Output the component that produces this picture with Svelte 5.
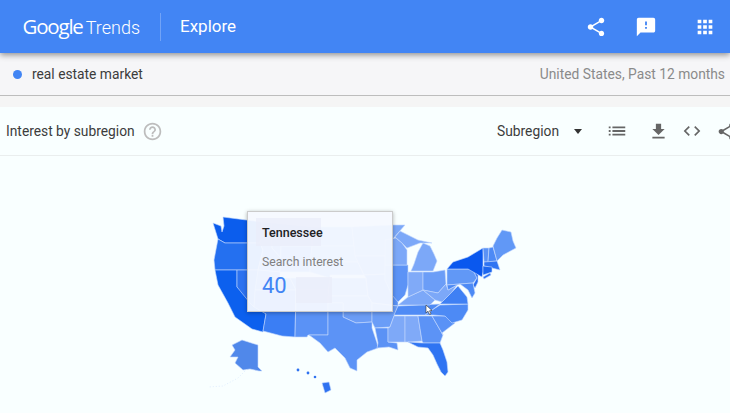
<script>
  const blue = '#4285f4';
  const states = [
    ['213,223 221,226 222,232 224,226 223,217 262,222 260,243 225,243 218,239', '#0b5ded'],
    ['218,239 225,243 260,243 263,250 258,270 215,270 214,260', '#2470f0'],
    ['215,270 237,270 237,287 266,314 263,332 252,329 235,317 228,303 218,285', '#0c60ee'],
    ['237,270 260,270 254,307 250,303 237,287', '#2c72f0'],
    ['262,222 272,223 272,248 281,258 280,272 258,270 263,250 260,243', '#4d8af5'],
    ['272,223 312,227 312,246 281,246 281,258 272,248', '#5a92f6'],
    ['281,246 312,246 310,272 280,272', '#5a92f6'],
    ['258,270 280,272 280,278 290,278 296,290 255,290', '#4d8af5'],
    ['290,278 330,278 328,290 296,290', '#5a92f6'],
    ['312,227 352,227 354,246 312,246', '#7ca8f8'],
    ['312,246 355,246 358,262 310,262', '#7ca8f8'],
    ['310,262 358,262 364,275 330,275 330,278 310,272', '#6c9df6'],
    ['330,278 366,278 368,296 328,296', '#6c9df6'],
    ['352,227 393,225 405,225 392,240 388,256 355,256 354,246', '#7ca8f8'],
    ['355,256 388,256 393,265 388,274 364,275', '#6c9df6'],
    ['364,275 388,274 392,285 398,302 398,306 372,303 368,296 366,278', '#5a92f6'],
    ['255,290 296,290 295,337 282,336 263,331 266,314 254,307', '#3b7ef4'],
    ['296,290 328,290 328,335 308,335 307,337 295,337', '#5a92f6'],
    ['328,296 368,296 372,303 372,322 356,323 343,317 343,303 328,303', '#6c9df6'],
    ['328,303 343,303 343,317 356,323 372,322 372,328 377,343 378,348 367,352 357,360 357,371 350,368 345,358 335,348 328,352 320,343 309,335 328,335', '#5c93f6'],
    ['372,303 398,306 394,316 390,327 375,328 372,322', '#6a9df7'],
    ['375,328 388,328 388,342 397,343 398,350 389,347 377,348 378,343', '#5b92f5'],
    ['390,327 394,316 405,316 405,342 398,342 388,342 388,328', '#7ea9f8'],
    ['405,316 418,316 422,341 410,342 405,342', '#80aaf8'],
    ['418,316 432,316 443,335 440,343 423,343 422,341', '#5c93f6'],
    ['432,316 445,316 455,323 442,333 443,335', '#5a92f6'],
    ['425,315 433,315 445,316 452,323 462,320 468,310 468,304 440,305 432,310', '#4d8af5'],
    ['408,342 423,343 440,343 443,350 447,362 448,372 445,376 441,372 437,364 433,355 428,348 418,347', '#2f74f2'],
    ['394,315 398,306 440,304 432,310 425,315', '#4f8bf5'],
    ['398,305 408,297 423,290 435,300 430,305', '#7ca8f8'],
    ['385,265 408,265 408,285 405,295 398,302 392,295 385,280', '#5c93f6'],
    ['408,272 423,272 423,290 408,297', '#80aaf8'],
    ['423,272 433,272 445,270 446,284 438,293 423,290', '#6b9df7'],
    ['423,290 438,293 446,284 448,290 457,285 452,292 442,302 435,300', '#7ca8f8'],
    ['440,304 442,302 452,292 458,286 467,297 468,304', '#3f80f4'],
    ['385,240 396,238 402,243 407,250 407,265 385,265', '#7ca8f8'],
    ['395,237 400,231 408,235 418,240 432,243 420,243 407,248 402,243', '#7ca8f8'],
    ['411,271 414,264 418,252 423,243 430,246 434,254 437,261 433,271', '#7ca8f8'],
    ['447,269 468,269 473,270 477,278 473,283 447,285', '#6198f6'],
    ['473,270 478,275 478,282 475,288 473,285 477,278', '#2e70ef'],
    ['447,285 473,283 475,293 472,298 468,290 460,284 457,285 448,290', '#4d8af5'],
    ['483,248 468,257 453,262 447,269 468,269 482,277 483,272', '#0a58ee'],
    ['483,248 489,248 488,262 484,262', '#5b92f5'],
    ['489,248 493,247 497,261 488,262', '#4d8af5'],
    ['493,246 497,238 502,230 511,232 513,241 516,248 503,255 497,261', '#6198f6'],
    ['484,262 497,261 500,270 484,266', '#2f74f2'],
    ['483,266 492,267 492,272 483,275', '#1c66ee'],
    ['483,277 490,273 491,275 484,279', '#2f74f2'],
    ['232,345 242,340 258,345 258,367 262,371 259,371 250,369 243,370 235,363 238,357 230,357 235,350', '#5088ea'],
    ['322,383 329,382 331,390 325,393', '#2f72f0'],
  ];
  const dots = [[298,370,1.4],[308,373,1.4],[315,377,1.3]];
</script>

<div class="page">
  <header class="top">
    <div class="logo"><span class="g">Google</span><span class="t">Trends</span></div>
    <div class="rule"></div>
    <div class="title">Explore</div>
    <div class="spacer"></div>
    <svg class="ic one" viewBox="0 0 24 24"><path d="M18 16.08c-.76 0-1.44.3-1.96.77L8.91 12.7c.05-.23.09-.46.09-.7s-.04-.47-.09-.7l7.05-4.11c.54.5 1.25.81 2.04.81 1.66 0 3-1.34 3-3s-1.34-3-3-3-3 1.34-3 3c0 .24.04.47.09.7L8.04 9.81C7.5 9.31 6.79 9 6 9c-1.66 0-3 1.34-3 3s1.34 3 3 3c.79 0 1.5-.31 2.04-.81l7.12 4.16c-.05.21-.08.43-.08.65 0 1.61 1.31 2.92 2.92 2.92 1.61 0 2.92-1.31 2.92-2.92s-1.31-2.92-2.92-2.92z"/></svg>
    <svg class="ic two" viewBox="0 0 24 24"><path d="M20 2H4c-1.1 0-1.99.9-1.99 2L2 22l4-4h14c1.1 0 2-.9 2-2V4c0-1.1-.9-2-2-2zm-7 12h-2v-2h2v2zm0-4h-2V6h2v4z"/></svg>
    <svg class="ic three" viewBox="0 0 24 24"><path d="M4 8h4V4H4v4zm6 12h4v-4h-4v4zm-6 0h4v-4H4v4zm0-6h4v-4H4v4zm6 0h4v-4h-4v4zm6-10v4h4V4h-4zm-6 4h4V4h-4v4zm6 6h4v-4h-4v4zm0 6h4v-4h-4v4z"/></svg>
  </header>

  <section class="term">
    <span class="dot"></span>
    <span class="name">real estate market</span>
    <span class="scope">United States, Past 12 months</span>
  </section>

  <section class="card">
    <div class="bar">
      <span class="label">Interest by subregion</span>
      <svg class="help" viewBox="0 0 24 24"><path d="M11 18h2v-2h-2v2zm1-16C6.48 2 2 6.48 2 12s4.48 10 10 10 10-4.48 10-10S17.52 2 12 2zm0 18c-4.41 0-8-3.59-8-8s3.59-8 8-8 8 3.59 8 8-3.59 8-8 8zm0-14c-2.21 0-4 1.79-4 4h2c0-1.1.9-2 2-2s2 .9 2 2c0 2-3 1.75-3 5h2c0-2.25 3-2.5 3-5 0-2.21-1.79-4-4-4z"/></svg>
      <span class="spacer"></span>
      <span class="select">Subregion</span>
      <span class="caret"></span>
      <svg class="tool list" viewBox="0 0 24 24"><path d="M3 13h2v-2H3v2zm0 4h2v-2H3v2zm0-8h2V7H3v2zm4 4h14v-2H7v2zm0 4h14v-2H7v2zM7 7v2h14V7H7z"/></svg>
      <svg class="tool down" viewBox="0 0 24 24"><path d="M19 9h-4V3H9v6H5l7 7 7-7zM5 18v2h14v-2H5z"/></svg>
      <svg class="tool code" viewBox="0 0 24 24"><path d="M9.4 16.6L4.8 12l4.6-4.6L8 6l-6 6 6 6 1.4-1.4zm5.2 0l4.6-4.6-4.6-4.6L16 6l6 6-6 6-1.4-1.4z"/></svg>
      <svg class="tool share" viewBox="0 0 24 24"><path d="M18 16.08c-.76 0-1.44.3-1.96.77L8.91 12.7c.05-.23.09-.46.09-.7s-.04-.47-.09-.7l7.05-4.11c.54.5 1.25.81 2.04.81 1.66 0 3-1.34 3-3s-1.34-3-3-3-3 1.34-3 3c0 .24.04.47.09.7L8.04 9.81C7.5 9.31 6.79 9 6 9c-1.66 0-3 1.34-3 3s1.34 3 3 3c.79 0 1.5-.31 2.04-.81l7.12 4.16c-.05.21-.08.43-.08.65 0 1.61 1.31 2.92 2.92 2.92 1.61 0 2.92-1.31 2.92-2.92s-1.31-2.92-2.92-2.92z"/></svg>
    </div>

    <div class="canvas">
      <svg class="map" viewBox="0 156 730 257">
        {#each states as [points, fill]}
          <polygon {points} {fill} stroke="#c4d8fd" stroke-width="0.6" stroke-linejoin="round"/>
        {/each}
        {#each dots as [cx, cy, r]}
          <circle {cx} {cy} {r} fill="#2f72f0"/>
        {/each}
        <path class="chain" d="M247 369 L238 378 L223 386 L208 387"/>
        <path class="cursor" d="M426 305 L426 313 L428 311.2 L429.6 314.5 L431 313.8 L429.5 310.8 L432 310.5 Z"/>
      </svg>

      <div class="tip">
        <span class="patch a"></span>
        <span class="patch b"></span>
        <div class="state">Tennessee</div>
        <div class="metric">Search interest</div>
        <div class="value" style:color={blue}>40</div>
      </div>
    </div>
  </section>
</div>

<style>
  :global(body) {
    margin: 0;
    overflow: hidden;
    background: #f5f5f5;
  }
  .page {
    width: 730px;
    height: 413px;
    overflow: hidden;
    display: flex;
    flex-direction: column;
    font-family: Roboto, "Liberation Sans", sans-serif;
  }
  .top {
    height: 53px;
    flex: none;
    display: flex;
    align-items: center;
    padding-left: 22.5px;
    background: #4285f4;
    color: #fff;
    box-shadow: 0 2px 6px rgba(0, 0, 0, 0.42);
    position: relative;
    z-index: 1;
  }
  .logo {
    display: flex;
    align-items: baseline;
    width: 116.5px;
    margin-top: -2px;
  }
  .g {
    font-family: "Open Sans", Roboto, sans-serif;
    letter-spacing: -1.2px;
    font-size: 20.5px;
  }
  .t {
    margin-left: 3px;
    font-size: 18px;
    font-weight: 300;
  }
  .rule {
    width: 1px;
    height: 28px;
    margin-left: 21px;
    background: rgba(255, 255, 255, 0.25);
  }
  .title {
    margin-left: 19px;
    font-size: 17px;
    margin-top: -1px;
  }
  .spacer {
    flex: 1;
  }
  .ic {
    width: 22px;
    height: 22px;
    fill: #fff;
    flex: none;
  }
  .ic.two {
    margin-left: 28px;
  }
  .ic.three {
    margin-left: 37px;
    margin-right: 14.5px;
  }
  .term {
    height: 43px;
    flex: none;
    box-sizing: border-box;
    display: flex;
    align-items: center;
    padding: 0 5px 0 13px;
    background: #f6f6f8;
    border-bottom: 1px solid #bdbdbd;
    font-size: 13.8px;
  }
  .dot {
    width: 9px;
    height: 9px;
    border-radius: 50%;
    background: #4285f4;
    flex: none;
  }
  .name {
    margin-left: 10px;
    color: #3c3c3c;
    flex: 1;
  }
  .scope {
    color: #8a8a8a;
  }
  .card {
    margin-top: 11px;
    flex: 1;
    display: flex;
    flex-direction: column;
    background: #f9ffff;
  }
  .bar {
    height: 49px;
    flex: none;
    box-sizing: border-box;
    display: flex;
    align-items: center;
    padding-left: 6px;
    border-bottom: 1px solid #eaeeee;
    font-size: 13.8px;
    color: #3c3c3c;
  }
  .help {
    width: 21px;
    height: 21px;
    fill: #bdbdbd;
    margin-left: 7px;
    flex: none;
  }
  .caret {
    width: 0;
    height: 0;
    margin-left: 15px;
    border-left: 4.5px solid transparent;
    border-right: 4.5px solid transparent;
    border-top: 5px solid #333;
    flex: none;
  }
  .tool {
    width: 21px;
    height: 21px;
    fill: #666;
    flex: none;
  }
  .list {
    width: 22px;
    height: 22px;
    margin-left: 23.5px;
  }
  .down {
    margin-left: 20px;
  }
  .code {
    width: 20px;
    height: 20px;
    margin-left: 13.5px;
  }
  .share {
    margin-left: 14.4px;
    margin-right: -7.4px;
  }
  .canvas {
    position: relative;
    flex: 1;
  }
  .map {
    display: block;
    width: 730px;
    height: 257px;
  }
  .chain {
    fill: none;
    stroke: #cfe0fb;
    stroke-width: 0.6;
    stroke-dasharray: 1 2;
  }
  .cursor {
    fill: #fff;
    stroke: #333;
    stroke-width: 0.6;
  }
  .tip {
    position: absolute;
    left: 247px;
    top: 55px;
    width: 146px;
    height: 101px;
    box-sizing: border-box;
    padding: 13px 14px;
    background: rgba(246, 249, 255, 0.95);
    border: 1.5px solid #cbcbcb;
    box-shadow: 0 1px 4px rgba(0, 0, 0, 0.3);
  }
  .patch {
    position: absolute;
    background: #e9edfa;
    opacity: 0.7;
  }
  .patch.a {
    left: 8px;
    top: 6px;
    width: 65px;
    height: 28px;
  }
  .patch.b {
    left: 48px;
    top: 65px;
    width: 36px;
    height: 26px;
  }
  .state,
  .metric,
  .value {
    position: relative;
  }
  .state {
    font-size: 12.5px;
    font-weight: 500;
    line-height: 15px;
    color: #202124;
  }
  .metric {
    margin-top: 15px;
    font-size: 12.2px;
    line-height: 15px;
    color: #808080;
  }
  .value {
    margin-top: 3px;
    font-size: 22px;
    line-height: 26px;
  }
</style>
